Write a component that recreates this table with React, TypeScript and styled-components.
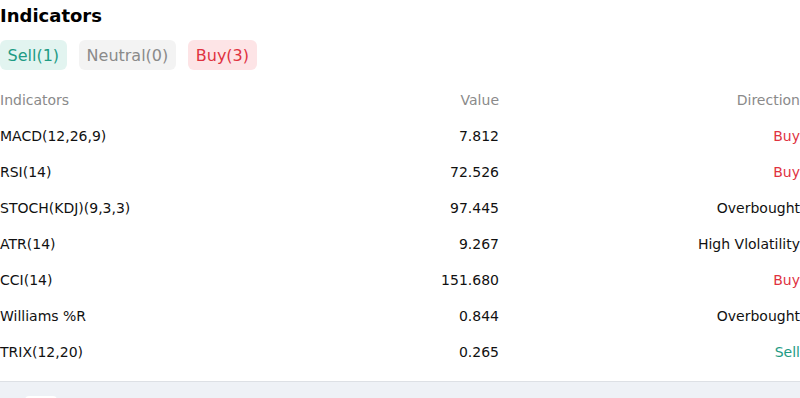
import React from "react";
import styled, { createGlobalStyle } from "styled-components";

const Global = createGlobalStyle`
  html, body { margin: 0; padding: 0; background: #fff; }
  body { font-family: "DejaVu Sans", "Liberation Sans", sans-serif; color: #111; }
`;

const Page = styled.div`
  width: 800px;
  height: 398px;
  overflow: hidden;
  display: flex;
  flex-direction: column;
`;

const Title = styled.h2`
  margin: 0;
  padding-top: 5px;
  height: 25px;
  font-size: 18px;
  font-weight: 700;
  line-height: 22px;
  color: #000;
`;

const Tabs = styled.div`
  display: flex;
  gap: 12.5px;
  margin-top: 10px;
  padding-top: 3px;
`;

type Tone = "sell" | "neutral" | "buy";

const toneText: Record<Tone, string> = { sell: "#1e9b84", neutral: "#8a8a8a", buy: "#e0323f" };
const toneBg: Record<Tone, string> = { sell: "#e2f4f0", neutral: "#f3f3f3", buy: "#fde4e6" };

const Tab = styled.div<{ $tone: Tone }>`
  height: 30px;
  padding: 0 7.5px;
  display: flex;
  align-items: center;
  border-radius: 6px;
  font-size: 16px;
  color: ${(p) => toneText[p.$tone]};
  background: ${(p) => toneBg[p.$tone]};
`;

const Table = styled.div`
  margin-top: 12px;
  display: grid;
  grid-template-columns: 1fr 200px 301px;
  grid-auto-rows: 36px;
  font-size: 14px;
`;

const Cell = styled.div<{ $align?: "left" | "right"; $color?: string }>`
  display: flex;
  align-items: center;
  justify-content: ${(p) => (p.$align === "right" ? "flex-end" : "flex-start")};
  color: ${(p) => p.$color || "#111"};
  white-space: nowrap;
`;

const Footer = styled.div`
  margin-top: 11px;
  flex: 1;
  border-top: 1px solid #dde0e5;
  background: #eef1f6;
  padding: 14px 0 0 25px;
`;

const Chip = styled.div`
  width: 32px;
  height: 20px;
  background: #fff;
  border-radius: 4px;
`;

const dirColor = (d: string) => (d === "Buy" ? "#e0323f" : d === "Sell" ? "#1e9b84" : "#111");

const rows: [string, string, string][] = [
  ["MACD(12,26,9)", "7.812", "Buy"],
  ["RSI(14)", "72.526", "Buy"],
  ["STOCH(KDJ)(9,3,3)", "97.445", "Overbought"],
  ["ATR(14)", "9.267", "High Vlolatility"],
  ["CCI(14)", "151.680", "Buy"],
  ["Williams %R", "0.844", "Overbought"],
  ["TRIX(12,20)", "0.265", "Sell"],
];

export default function App() {
  return (
    <Page>
      <Global />
      <Title>Indicators</Title>
      <Tabs>
        <Tab $tone="sell">Sell(1)</Tab>
        <Tab $tone="neutral">Neutral(0)</Tab>
        <Tab $tone="buy">Buy(3)</Tab>
      </Tabs>
      <Table>
        <Cell $color="#8a8a8a">Indicators</Cell>
        <Cell $align="right" $color="#8a8a8a">Value</Cell>
        <Cell $align="right" $color="#8a8a8a">Direction</Cell>
        {rows.map(([n, v, d]) => (
          <React.Fragment key={n}>
            <Cell>{n}</Cell>
            <Cell $align="right">{v}</Cell>
            <Cell $align="right" $color={dirColor(d)}>{d}</Cell>
          </React.Fragment>
        ))}
      </Table>
      <Footer>
        <Chip />
      </Footer>
    </Page>
  );
}
